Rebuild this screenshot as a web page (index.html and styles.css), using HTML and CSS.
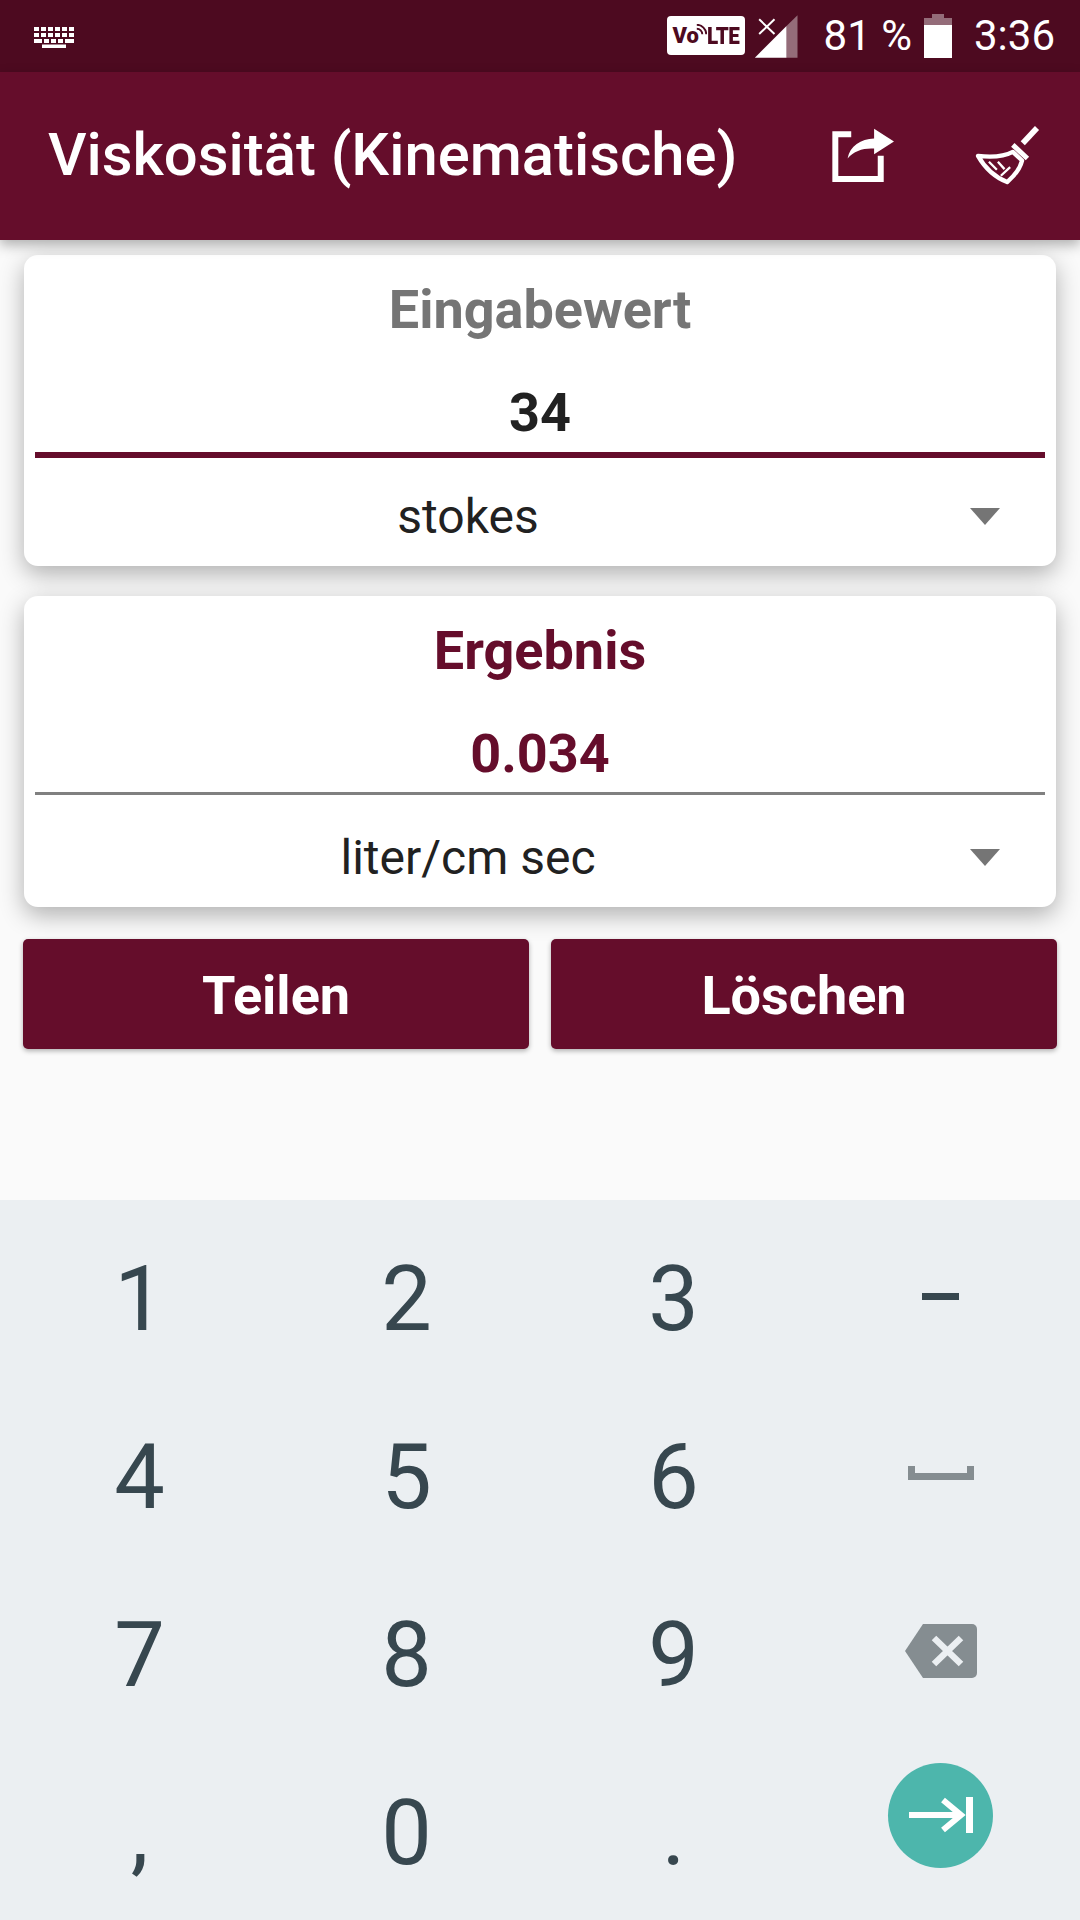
FILE: index.html
```html
<!DOCTYPE html>
<html lang="de">
<head>
<meta charset="utf-8">
<title>Viskosität (Kinematische)</title>
<link rel="stylesheet" href="styles.css">
</head>
<body>
<div class="screen">
  <header class="status">
    <svg class="kbd-icon" viewBox="0 0 42 22" aria-hidden="true">
      <g fill="#fff">
        <rect x="1" y="1" width="5" height="4"/><rect x="8" y="1" width="5" height="4"/><rect x="15" y="1" width="5" height="4"/><rect x="22" y="1" width="5" height="4"/><rect x="29" y="1" width="5" height="4"/><rect x="36" y="1" width="5" height="4"/>
        <rect x="1" y="7" width="5" height="4"/><rect x="8" y="7" width="5" height="4"/><rect x="15" y="7" width="5" height="4"/><rect x="22" y="7" width="5" height="4"/><rect x="29" y="7" width="5" height="4"/><rect x="36" y="7" width="5" height="4"/>
        <rect x="1" y="13" width="8" height="4"/><rect x="11" y="13" width="5" height="4"/><rect x="18" y="13" width="5" height="4"/><rect x="25" y="13" width="5" height="4"/><rect x="32" y="13" width="9" height="4"/>
        <rect x="9" y="18.5" width="24" height="3.5"/>
      </g>
    </svg>
    <div class="status-right">
      <div class="volte">
        <span>Vo</span>
        <svg class="volte-wave" viewBox="0 0 14 14" aria-hidden="true"><path d="M1 6 A7 7 0 0 1 8 13 M1 1 A12 12 0 0 1 13 13" fill="none" stroke="#4d0a20" stroke-width="2.4"/></svg>
        <span class="volte-lte">LTE</span>
      </div>
      <svg class="signal" viewBox="340 40 140 135" aria-hidden="true">
        <path d="M345 171 L440 76 V171 Z" fill="#fff"/>
        <path d="M440 76 L473 44 V171 H440 Z" fill="#fff" fill-opacity=".4"/>
        <path d="M358 56 L404 100 M404 56 L358 100" stroke="#fff" stroke-width="6" fill="none"/>
      </svg>
      <span class="battery-pct">81 %</span>
      <svg class="battery" viewBox="0 0 28 44" aria-hidden="true">
        <path d="M8 0 H20 V4 H28 V44 H0 V4 H8 Z" fill="#fff" fill-opacity=".4"/>
        <rect x="0" y="11" width="28" height="33" fill="#fff"/>
      </svg>
      <span class="clock">3:36</span>
    </div>
  </header>

  <div class="appbar">
    <h1 class="appbar-title">Viskosität (Kinematische)</h1>
    <svg class="share-icon" viewBox="570 380 200 175" aria-hidden="true">
      <path d="M636 405 H588 V540 H725 V470" fill="none" stroke="#fff" stroke-width="18"/>
      <path d="M625 478 C632 440 665 420 705 418 V388 L765 427 L705 465 V448 C672 446 645 455 625 478 Z" fill="#fff"/>
    </svg>
    <svg class="broom-icon" viewBox="1000 375 205 185" aria-hidden="true">
      <path d="M1193 386 L1150 432" stroke="#fff" stroke-width="17" fill="none"/>
      <path d="M1120 437 L1164 478" stroke="#fff" stroke-width="15" fill="none"/>
      <path d="M1120 458 C1090 474 1050 474 1015 470 C1035 505 1068 535 1103 549 C1125 530 1142 510 1148 484 Z" fill="none" stroke="#fff" stroke-width="13" stroke-linejoin="round"/>
      <path d="M1048 488 L1072 512 M1084 530 L1112 504 M1075 488 L1095 510" stroke="#fff" stroke-width="7" fill="none"/>
    </svg>
  </div>

  <main class="content">
    <section class="card">
      <div class="card-title">Eingabewert</div>
      <div class="value value-input">34</div>
      <div class="select">
        <span class="select-label">stokes</span>
        <span class="caret"></span>
      </div>
    </section>
    <section class="card card-result">
      <div class="card-title title-accent">Ergebnis</div>
      <div class="value value-output">0.034</div>
      <div class="select">
        <span class="select-label">liter/cm sec</span>
        <span class="caret"></span>
      </div>
    </section>
    <div class="actions">
      <button class="btn">Teilen</button>
      <button class="btn">Löschen</button>
    </div>
  </main>

  <section class="keyboard">
    <div class="key">1</div><div class="key">2</div><div class="key">3</div>
    <div class="key"><span class="minus"></span></div>
    <div class="key">4</div><div class="key">5</div><div class="key">6</div>
    <div class="key">
      <svg class="space-icon" viewBox="0 0 66 14" aria-hidden="true"><path d="M0 0 H7 V7 H59 V0 H66 V14 H0 Z" fill="#858d91"/></svg>
    </div>
    <div class="key">7</div><div class="key">8</div><div class="key">9</div>
    <div class="key">
      <svg class="back-icon" viewBox="0 0 72 54" aria-hidden="true">
        <path d="M18 0 H67 A5 5 0 0 1 72 5 V49 A5 5 0 0 1 67 54 H18 L0 27 Z" fill="#858d91"/>
        <path d="M29 14 L56 40 M56 14 L29 40" stroke="#ebeff2" stroke-width="6.5" fill="none"/>
      </svg>
    </div>
    <div class="key">,</div><div class="key">0</div><div class="key">.</div>
    <div class="key">
      <div class="go">
        <svg class="go-icon" viewBox="0 0 64 36" aria-hidden="true">
          <path d="M0 18 H52 M34 3 L52 18 L34 33" fill="none" stroke="#fff" stroke-width="6"/>
          <rect x="57" y="0" width="7" height="36" fill="#fff"/>
        </svg>
      </div>
    </div>
  </section>
</div>
</body>
</html>
```

FILE: styles.css
```css
* { box-sizing: border-box; }
html, body { margin: 0; padding: 0; }
body { font-family: Roboto, "Noto Sans", sans-serif; background: #fafafa; }
.screen { width: 1080px; height: 1920px; display: flex; flex-direction: column; overflow: hidden; background: #fafafa; }

.status { height: 72px; flex: none; background: #4d0a20; display: flex; align-items: center; justify-content: space-between; padding: 0 25px 0 33px; color: #fff; }
.kbd-icon { width: 42px; height: 22px; margin-top: 2px; display: block; }
.status-right { display: flex; align-items: center; }
.volte { width: 78px; height: 39px; background: #fff; border-radius: 4px; display: flex; align-items: center; justify-content: center; color: #4d0a20; font-weight: 900; font-size: 22px; margin-top: -1px; }
.volte-lte { font-size: 24px; letter-spacing: -.5px; transform: scaleX(.86); transform-origin: left center; width: 32px; }
.volte-wave { width: 11px; height: 11px; margin: -12px 0 0 -3px; }
.signal { width: 47px; height: 45px; margin-left: 8px; display: block; }
.battery-pct { font-size: 42px; margin-left: 24px; line-height: 72px; }
.battery { width: 28px; height: 44px; margin-left: 12px; display: block; }
.clock { font-size: 42px; margin-left: 22px; line-height: 72px; }

.appbar { height: 168px; flex: none; background: #650d2b; display: flex; align-items: center; padding-left: 48px; position: relative; z-index: 2; box-shadow: 0 5px 12px rgba(0,0,0,.3); }
.appbar-title { margin: 0; font-size: 59.8px; font-weight: 500; color: #fff; width: 781px; flex: none; white-space: nowrap; line-height: 1; }
.share-icon { width: 67px; height: 58px; flex: none; display: block; margin-top: -2px; filter: blur(.6px); }
.broom-icon { width: 68px; height: 62px; flex: none; display: block; margin-left: 77px; margin-top: -2px; filter: blur(.5px); }

.content { flex: 1; padding: 15px 23px 0; display: flex; flex-direction: column; min-height: 0; }
.card { margin: 0 1px; height: 311px; background: #fff; border-radius: 14px; padding: 0 11px; box-shadow: 0 8px 24px rgba(0,0,0,.3); display: flex; flex-direction: column; align-items: stretch; }
.card-result { margin-top: 30px; }
.card-title { font-size: 54px; font-weight: 700; color: #757575; text-align: center; line-height: 58px; padding-top: 26px; height: 84px; }
.title-accent { color: #650d2b; }
.value { font-size: 54px; font-weight: 700; text-align: center; line-height: 60px; padding-top: 44px; }
.value-input { height: 119px; color: #212121; border-bottom: 6px solid #650d2b; }
.value-output { height: 115px; color: #650d2b; border-bottom: 3px solid #808080; }
.select { flex: 1; display: flex; align-items: center; padding-top: 8px; }
.card-result .select { padding-top: 12px; }
.select-label { flex: 1; text-align: center; font-size: 48px; color: #212121; }
.caret { width: 0; height: 0; flex: none; margin: 0 45px 0 69px; border-style: solid; border-width: 17px 15px 0; border-color: #757575 transparent transparent; }

.actions { display: grid; grid-template-columns: 1fr 1fr; gap: 22px; margin-top: 32px; }
.btn { height: 110px; border: 0; border-radius: 5px; background: #650d2b; color: #fff; font-family: inherit; font-size: 54px; font-weight: 700; padding: 3px 0 0; box-shadow: 0 2px 5px rgba(0,0,0,.3); }

.keyboard { height: 720px; flex: none; background: #ebeff2; display: grid; grid-template-columns: repeat(4, 267px); grid-auto-rows: 178px; padding: 9px 6px 0; }
.key { display: flex; align-items: center; justify-content: center; font-size: 90px; color: #37474f; line-height: 1; padding-top: 4px; }
.minus { width: 37px; height: 7px; background: #37474f; display: block; margin-bottom: 7px; }
.space-icon { width: 66px; height: 14px; display: block; margin-bottom: 10px; }
.back-icon { width: 72px; height: 54px; display: block; margin-bottom: 11px; }
.go { width: 105px; height: 105px; border-radius: 50%; background: #4db6ac; display: flex; align-items: center; justify-content: center; margin-bottom: 38px; }
.go-icon { width: 64px; height: 36px; display: block; }
```
